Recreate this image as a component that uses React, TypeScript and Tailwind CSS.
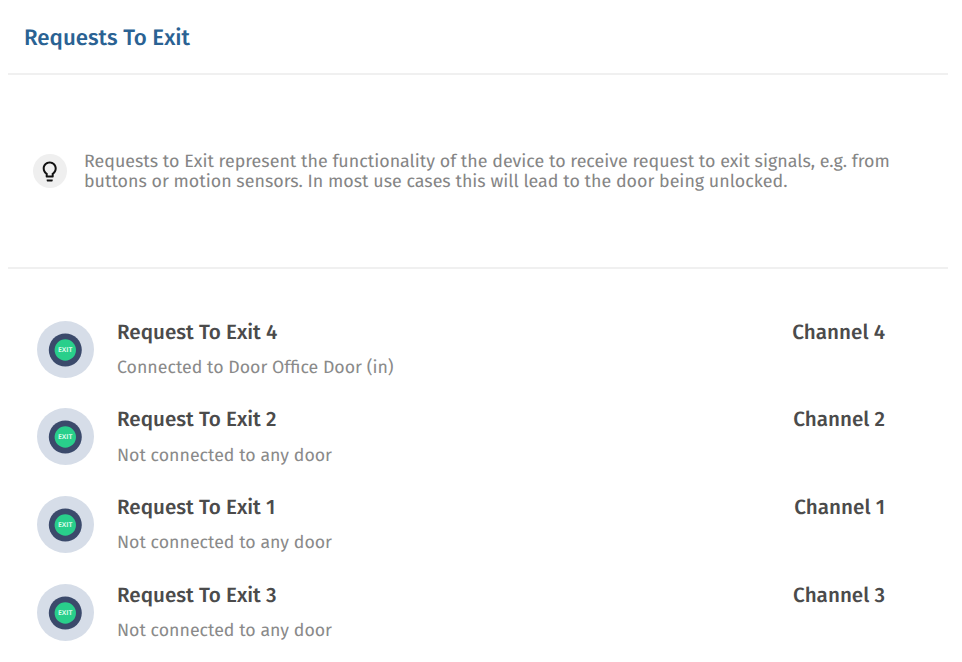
const requests = [
  { id: 4, status: 'Connected to Door Office Door (in)' },
  { id: 2, status: 'Not connected to any door' },
  { id: 1, status: 'Not connected to any door' },
  { id: 3, status: 'Not connected to any door' },
];

function BulbIcon() {
  return (
    <svg className="size-6" viewBox="0.3 -0.6 24 24" fill="#111">
      <path d="M9 21c0 .55.45 1 1 1h4c.55 0 1-.45 1-1v-1H9v1zm3-19C8.14 2 5 5.14 5 9c0 2.38 1.19 4.47 3 5.74V17c0 .55.45 1 1 1h6c.55 0 1-.45 1-1v-2.26c1.81-1.27 3-3.36 3-5.74 0-3.86-3.14-7-7-7zm2.85 11.1-.85.6V16h-4v-2.3l-.85-.6C7.8 12.16 7 10.63 7 9c0-2.76 2.24-5 5-5s5 2.24 5 5c0 1.63-.8 3.16-2.15 4.1z" />
    </svg>
  );
}

function ExitIcon() {
  return (
    <svg className="size-[57px] shrink-0" viewBox="0 0 57 57">
      <circle cx="28.5" cy="28.5" r="28.5" fill="#d6dde8" />
      <circle cx="28.3" cy="29" r="16.5" fill="#3b4a6b" />
      <circle cx="28.3" cy="29" r="10.7" fill="#29cf8b" />
      <text x="28.2" y="31.4" textAnchor="middle" textLength="14.5" lengthAdjust="spacingAndGlyphs" fontFamily="Open Sans, sans-serif" fontWeight="700" fontSize="6.8" fill="#d9fbea">EXIT</text>
    </svg>
  );
}

export default function App() {
  return (
    <main className="h-[662px] w-[962px] overflow-hidden bg-white pr-[14px] pl-2 font-['Fira_Sans','Open_Sans',sans-serif] antialiased [text-rendering:geometricPrecision]">
      <header className="flex h-[75px] items-center border-b-2 border-[#f0f0f0] pt-[3px] pl-4">
        <h1 className="text-[22.3px] font-medium whitespace-nowrap text-[#2a6293]">Requests To Exit</h1>
      </header>
      <section className="flex h-[194px] items-center border-b-2 border-[#f0f0f0] pl-[25px]">
        <span className="flex size-[34px] items-center justify-center rounded-full bg-[#efefef]">
          <BulbIcon />
        </span>
        <p className="ml-[17px] text-[17.85px] leading-5 whitespace-nowrap text-[#858585]">
          Requests to Exit represent the functionality of the device to receive request to exit signals, e.g. from
          <br />
          buttons or motion sensors. In most use cases this will lead to the door being unlocked.
        </p>
      </section>
      <ul className="pt-[51.8px] pr-[63px] pl-[29px]">
        {requests.map((request) => (
          <li key={request.id} className="flex h-[87.6px] items-start">
            <ExitIcon />
            <div className="ml-[23px] flex-1 whitespace-nowrap">
              <h2 className="text-[20.65px] leading-6 font-medium text-[#4b4b4b]">Request To Exit {request.id}</h2>
              <p className="mt-[11.5px] text-[17.75px] leading-[22px] text-[#8a8a8a]">{request.status}</p>
            </div>
            <span className="text-[20.65px] leading-6 font-medium text-[#4b4b4b]">Channel {request.id}</span>
          </li>
        ))}
      </ul>
    </main>
  );
}
